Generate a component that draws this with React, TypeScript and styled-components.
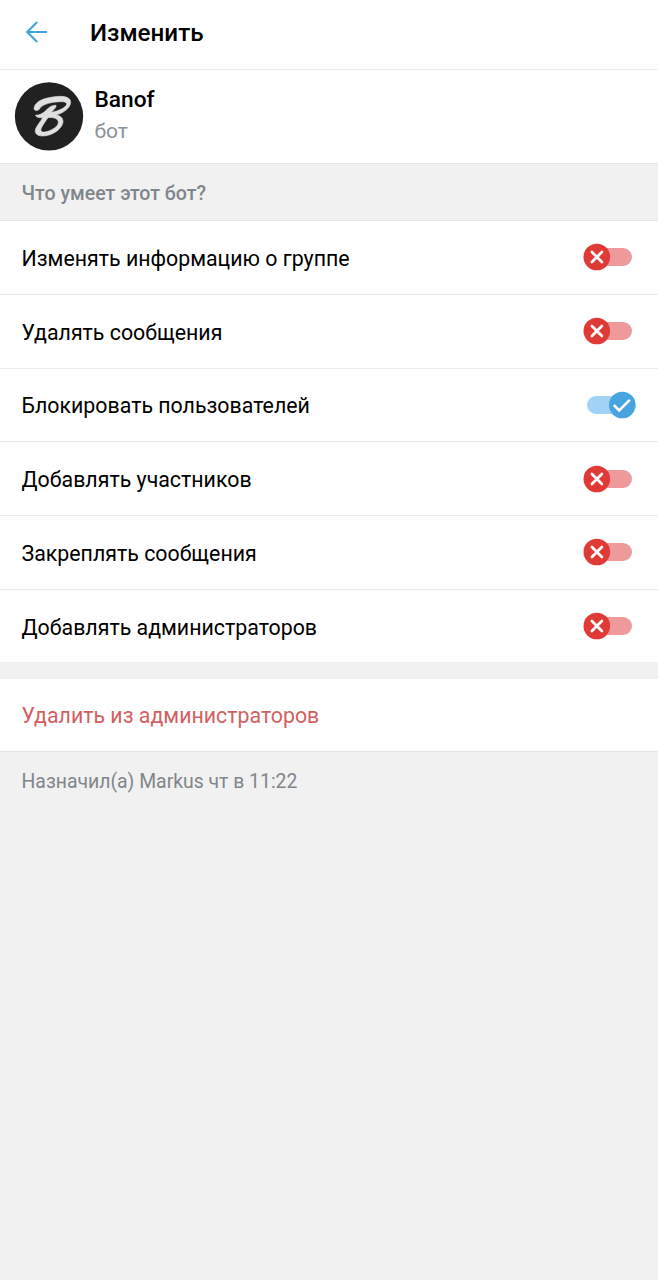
import React, { useState } from 'react';
import styled, { createGlobalStyle } from 'styled-components';

const GlobalStyle = createGlobalStyle`
  * { box-sizing: border-box; }
  body { margin: 0; background: #f1f1f1; font-family: Roboto, "Noto Sans", sans-serif; color: #000; }
`;

const Screen = styled.main`
  min-height: 1280px;
  background: #f1f1f1;
`;

const Header = styled.header`
  display: flex;
  align-items: center;
  height: 70px;
  padding: 0 22px 4px 24px;
  background: #fefefe;
  border-bottom: 1px solid #ececec;
`;

const BackButton = styled.button`
  display: flex;
  width: 66px;
  padding: 0;
  border: 0;
  background: none;
`;

const Title = styled.h1`
  margin: 0;
  font-size: 24.2px;
  line-height: 28px;
  font-weight: 500;
`;

const Profile = styled.section`
  display: flex;
  height: 93px;
  padding: 8px 10px;
  background: #fff;
`;

const Identity = styled.div`
  padding: 8px 0 0 8.5px;
`;

const Name = styled.div`
  font-size: 22.7px;
  line-height: 28px;
  font-weight: 500;
`;

const Kind = styled.div`
  margin-top: 3px;
  font-size: 21px;
  line-height: 28px;
  color: #8a9197;
`;

const SectionTitle = styled.h2`
  margin: 0;
  height: 58px;
  padding: 2px 21.5px 0;
  border: solid #e5e5e5;
  border-width: 1px 0;
  font-size: 19.6px;
  line-height: 56px;
  font-weight: 500;
  color: #80868b;
`;

const Row = styled.div`
  display: flex;
  align-items: center;
  justify-content: space-between;
  height: 73.75px;
  padding: 0 22px 0 21.5px;
  background: #fff;
  border-bottom: 1px solid #ebebeb;
  font-size: 21.35px;
  &:last-child { border-bottom: 0; height: 72.5px; }
`;

const Label = styled.span`
  padding-top: 2.2px;
`;

const Switch = styled.button`
  display: flex;
  padding: 0;
  border: 0;
  background: none;
`;

const Remove = styled.div`
  height: 73px;
  margin-top: 17px;
  padding: 1px 21.5px 0;
  background: #fff;
  border-bottom: 1px solid #e2e2e2;
  font-size: 21.35px;
  line-height: 72px;
  color: #d35f62;
`;

const Footnote = styled.p`
  margin: 0;
  padding: 16px 21.5px;
  font-size: 19.4px;
  line-height: 28px;
  color: #80868b;
`;

const BackIcon = () => (
  <svg width="25" height="24" viewBox="0 0 25 24" fill="none" stroke="#45a3dc" strokeWidth="2.2">
    <path d="M23 11H3.2M13.2 1L3.2 11L13.2 21" />
  </svg>
);

const Avatar = () => (
  <svg width="76" height="76" viewBox="0 0 228 228">
    <circle cx="117" cy="115" r="102.5" fill="#212121" />
    <path
      fill="#e0e0e0"
      stroke="#e0e0e0"
      strokeWidth="1.8"
      strokeLinejoin="round"
      fillRule="evenodd"
      d="M72 92C73 74 95 61 128 57C158 52 182 56 182 73C181 91 160 105 139 111C154 114 162 123 158 137C152 156 124 174 98 174C80 174 71 164 78 150C83 140 92 130 98 119C90 120 80 119 76 112C88 112 99 106 107 98C117 88 126 81 138 82C140 87 132 94 124 103C146 99 167 89 170 79C172 69 150 70 130 73C107 77 95 83 90 91C86 99 74 100 72 92ZM114 119C107 129 98 141 94 150C90 159 95 163 104 162C123 159 144 146 145 134C146 123 132 117 114 119Z"
    />
  </svg>
);

const Toggle = ({ on }: { on: boolean }) => (
  <svg width="54" height="28" viewBox="0 0 54 28" fill="none">
    <rect x={on ? 5 : 6} y="5" width="44" height="18" rx="9" fill={on ? '#a0d3f5' : '#ee9a9a'} />
    <circle cx={on ? 40.3 : 14.8} cy="14" r="13.3" fill={on ? '#47a4df' : '#df3a36'} />
    {on ? (
      <path d="M31.8 14L37.2 19.4L47.8 8.8" stroke="#fff" strokeWidth="2.5" />
    ) : (
      <path d="M9.9 9L19.9 19M19.9 9L9.9 19" stroke="#fff" strokeWidth="2.7" strokeLinecap="round" />
    )}
  </svg>
);

const permissions = [
  { label: 'Изменять информацию о группе', on: false },
  { label: 'Удалять сообщения', on: false },
  { label: 'Блокировать пользователей', on: true },
  { label: 'Добавлять участников', on: false },
  { label: 'Закреплять сообщения', on: false },
  { label: 'Добавлять администраторов', on: false },
];

const Permission = ({ label, initial }: { label: string; initial: boolean }) => {
  const [on, setOn] = useState(initial);
  return (
    <Row>
      <Label>{label}</Label>
      <Switch role="switch" aria-checked={on} aria-label={label} onClick={() => setOn(!on)}>
        <Toggle on={on} />
      </Switch>
    </Row>
  );
};

export default function App() {
  return (
    <Screen>
      <GlobalStyle />
      <Header>
        <BackButton aria-label="Назад"><BackIcon /></BackButton>
        <Title>Изменить</Title>
      </Header>
      <Profile>
        <Avatar />
        <Identity>
          <Name>Banof</Name>
          <Kind>бот</Kind>
        </Identity>
      </Profile>
      <SectionTitle>Что умеет этот бот?</SectionTitle>
      <div>
        {permissions.map((p) => (
          <Permission key={p.label} label={p.label} initial={p.on} />
        ))}
      </div>
      <Remove>Удалить из администраторов</Remove>
      <Footnote>Назначил(а) Markus чт в 11:22</Footnote>
    </Screen>
  );
}
